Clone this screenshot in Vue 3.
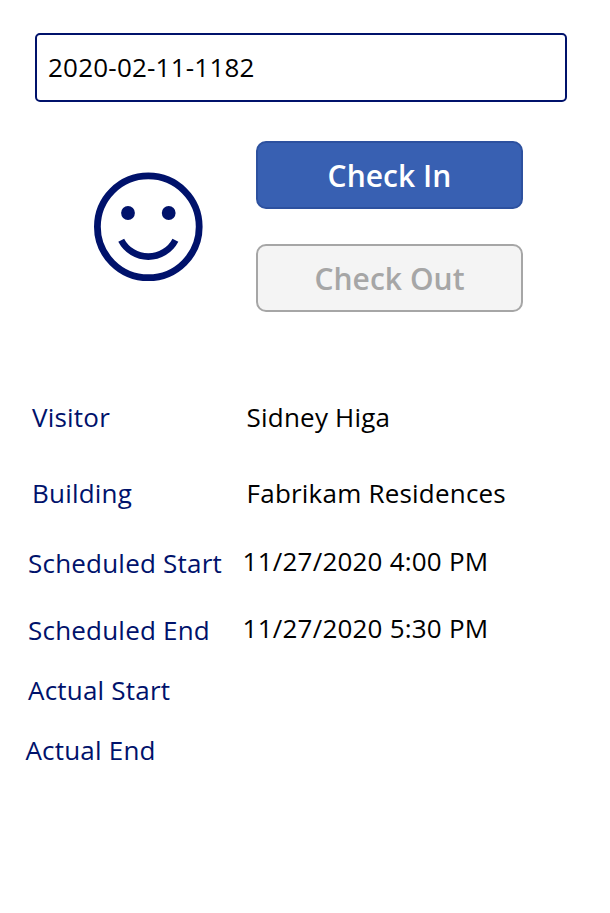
<script setup>
const rows = [
  { label: 'Visitor', value: 'Sidney Higa', key: 'visitor' },
  { label: 'Building', value: 'Fabrikam Residences', key: 'building' },
  { label: 'Scheduled Start', value: '11/27/2020 4:00 PM', key: 'sched-start' },
  { label: 'Scheduled End', value: '11/27/2020 5:30 PM', key: 'sched-end' },
  { label: 'Actual Start', value: '', key: 'actual-start' },
  { label: 'Actual End', value: '', key: 'actual-end' },
]
</script>

<template>
  <main class="screen">
    <div class="code">2020-02-11-1182</div>
    <section class="actions">
      <svg class="smile" viewBox="0 0 110 110" fill="none" stroke="#00126b">
        <circle cx="55.3" cy="54.8" r="50.9" stroke-width="6.8" />
        <circle cx="35" cy="41" r="6.9" fill="#00126b" stroke="none" />
        <circle cx="75.7" cy="41" r="6.9" fill="#00126b" stroke="none" />
        <path d="M28.2 68.2A30.6 30.6 0 0 0 82.4 68.2" stroke-width="6.6" />
      </svg>
      <div class="buttons">
        <button class="btn primary">Check In</button>
        <button class="btn" disabled>Check Out</button>
      </div>
    </section>
    <dl class="details">
      <div v-for="r in rows" :key="r.key" class="row" :class="r.key">
        <dt>{{ r.label }}</dt>
        <dd>{{ r.value }}</dd>
      </div>
    </dl>
  </main>
</template>

<style>
body { background: #fff; }
</style>

<style scoped>
.screen {
  box-sizing: border-box;
  height: 913px;
  padding: 33px 43px 0 35px;
  font-family: "Open Sans", sans-serif;
  font-size: 26px;
  line-height: 36px;
  letter-spacing: 0.21px;
  color: #000;
}
.code {
  box-sizing: border-box;
  height: 69px;
  padding: 14px 11px;
  border: 2px solid #00126b;
  border-radius: 5px;
}
.actions {
  display: flex;
  gap: 53px;
  padding: 39px 0 0 58px;
}
.smile {
  width: 110px;
  height: 110px;
  margin-top: 31px;
}
.buttons {
  display: flex;
  flex-direction: column;
  gap: 35px;
}
.btn {
  box-sizing: border-box;
  width: 267px;
  height: 68px;
  padding: 1px 0 0;
  border: 2px solid #a6a6a6;
  border-radius: 10px;
  background: #f4f4f4;
  color: #a6a6a6;
  font: 600 30px/40px "Open Sans", sans-serif;
  letter-spacing: 0.05px;
}
.primary {
  padding-top: 2px;
  border-color: #2d519f;
  background: #3860b2;
  color: #fff;
}
.details {
  margin: 87px 0 0 -10px;
}
.row {
  display: flex;
  height: 36px;
  white-space: nowrap;
}
dt {
  width: 214.6px;
  color: #00126b;
}
dd {
  margin: 0;
}
.visitor { margin: 0 0 40px 7px; }
.building { margin: 0 0 32px 7px; }
.sched-start { margin: 0 0 31px 3px; }
.sched-end { margin: 0 0 26px 3px; }
.sched-start dt, .sched-end dt { padding-top: 2px; }
.actual-start { margin: 0 0 24px 3px; }
.actual-end { margin-left: 0.4px; }
</style>
